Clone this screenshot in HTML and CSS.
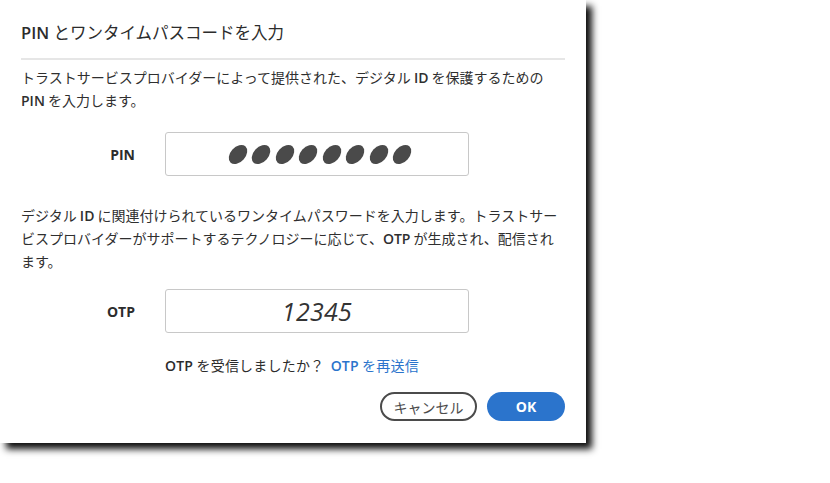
FILE: index.html
```html
<!DOCTYPE html>
<html lang="ja">
<head>
<meta charset="utf-8">
<title>PIN とワンタイムパスコードを入力</title>
<link rel="stylesheet" href="styles.css">
</head>
<body>
<div class="dialog">
  <h1 class="title"><span class="lat">PIN</span> とワンタイムパスコードを入力</h1>
  <div class="divider"></div>
  <p class="para para1">トラストサービスプロバイダーによって提供された、デジタル <span class="lat">ID</span> を保護するための<br><span class="lat">PIN</span> を入力します。</p>
  <div class="row row-pin">
    <label class="label">PIN</label>
    <div class="field">
      <span class="dots"><span class="dot"></span><span class="dot"></span><span class="dot"></span><span class="dot"></span><span class="dot"></span><span class="dot"></span><span class="dot"></span><span class="dot"></span></span>
    </div>
  </div>
  <p class="para para2">デジタル <span class="lat">ID</span> に関連付けられているワンタイムパスワードを入力します。トラストサー<br>ビスプロバイダーがサポートするテクノロジーに応じて、<span class="lat">OTP</span> が生成され、配信され<br>ます。</p>
  <div class="row row-otp">
    <label class="label">OTP</label>
    <div class="field"><span class="otp">12345</span></div>
  </div>
  <p class="resend"><span class="lat">OTP</span> を受信しましたか？ <a class="link" href="#"><span class="lat">OTP</span> を再送信</a></p>
  <div class="actions">
    <button class="btn btn-cancel" type="button">キャンセル</button>
    <button class="btn btn-ok" type="button">OK</button>
  </div>
</div>
</body>
</html>
```

FILE: styles.css
```css
html, body {
  margin: 0;
  padding: 0;
  background: #ffffff;
}

body {
  width: 830px;
  height: 483px;
  overflow: hidden;
  font-family: "Open Sans", "Noto Sans CJK JP", sans-serif;
  color: #2c2c2c;
}

.dialog {
  width: 586px;
  height: 443px;
  box-sizing: border-box;
  padding: 22px 21px 0 21px;
  background: #ffffff;
  box-shadow: 6px 6px 7px rgba(0, 0, 0, 0.95);
  display: flex;
  flex-direction: column;
}

.lat {
  font-family: "Open Sans", sans-serif;
  font-weight: 600;
}

.title {
  margin: 0;
  font-size: 16.5px;
  line-height: 22px;
  font-weight: 400;
  color: #2c2c2c;
}

.divider {
  margin-top: 14px;
  height: 2px;
  background: #e6e6e6;
}

.para {
  margin: 0;
  font-size: 14px;
  line-height: 23px;
  font-family: "Noto Sans CJK JP", sans-serif;
  font-weight: 400;
  color: #2f2f2f;
}

.para1 {
  margin-top: 6px;
}

.para2 {
  margin-top: 28px;
}

.row {
  display: flex;
  align-items: center;
  gap: 30px;
}

.row-pin {
  margin-top: 20px;
}

.row-otp {
  margin-top: 16px;
}

.label {
  width: 114px;
  text-align: right;
  font-family: "Open Sans", sans-serif;
  font-weight: 700;
  font-size: 14px;
  color: #2c2c2c;
}

.field {
  width: 304px;
  height: 44px;
  box-sizing: border-box;
  border: 1px solid #c8c8c8;
  border-radius: 3px;
  display: flex;
  align-items: center;
  justify-content: center;
}

.dots {
  display: flex;
  gap: 3.5px;
  margin-left: 6px;
}

.dot {
  width: 22px;
  height: 15px;
  margin: 0 -1px;
  border-radius: 50%;
  background: #4a4a4a;
  transform: rotate(-48deg);
}

.otp {
  font-family: "Open Sans", sans-serif;
  font-style: italic;
  font-size: 25px;
  color: #333333;
  letter-spacing: 0.3px;
}

.resend {
  margin: 22px 0 0 144px;
  font-size: 14px;
  line-height: 20px;
  font-family: "Noto Sans CJK JP", sans-serif;
  color: #2c2c2c;
  letter-spacing: 0.2px;
}

.link {
  color: #2b74cc;
  text-decoration: none;
  margin-left: 3px;
}

.actions {
  margin-top: 16px;
  display: flex;
  justify-content: flex-end;
  gap: 10px;
}

.btn {
  height: 29px;
  border-radius: 15px;
  font-size: 14px;
  padding: 0;
  cursor: pointer;
}

.btn-cancel {
  width: 97px;
  background: #ffffff;
  border: 2px solid #4b4b4b;
  color: #4b4b4b;
  font-family: "Noto Sans CJK JP", sans-serif;
}

.btn-ok {
  width: 78px;
  background: #2b74cc;
  border: none;
  color: #ffffff;
  font-family: "Open Sans", sans-serif;
  font-weight: 700;
}
```
